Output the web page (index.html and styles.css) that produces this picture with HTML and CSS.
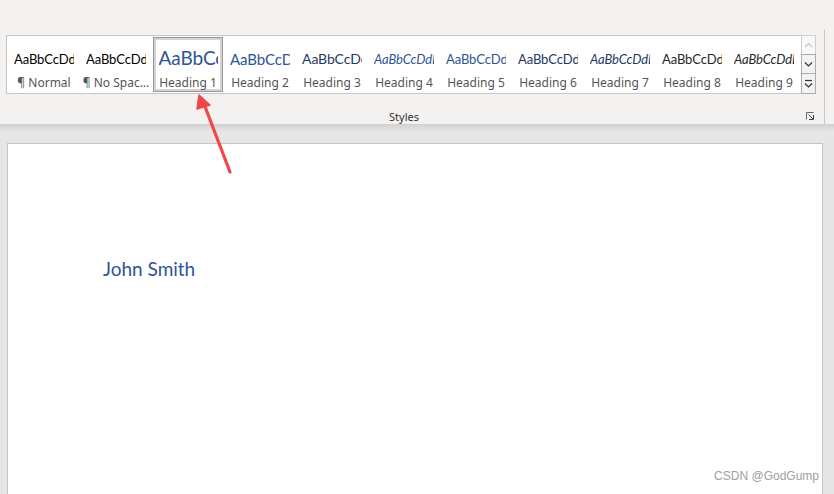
FILE: index.html
```html
<!DOCTYPE html>
<html>
<head>
<meta charset="utf-8">
<link rel="stylesheet" href="styles.css">
</head>
<body>
<div class="ribbon">
  <div class="group">
    <div class="gallery-row">
      <div class="gallery">
        <div class="item"><div class="pv pv-normal">AaBbCcDdEe</div><div class="lbl">¶ Normal</div></div>
        <div class="item"><div class="pv pv-normal">AaBbCcDdEe</div><div class="lbl">¶ No Spac...</div></div>
        <div class="item selected"><div class="pv pv-h1">AaBbCcDd</div><div class="lbl">Heading 1</div></div>
        <div class="item"><div class="pv pv-h2">AaBbCcDdE</div><div class="lbl">Heading 2</div></div>
        <div class="item"><div class="pv pv-h3">AaBbCcDdE</div><div class="lbl">Heading 3</div></div>
        <div class="item"><div class="pv pv-h4">AaBbCcDdEe</div><div class="lbl">Heading 4</div></div>
        <div class="item"><div class="pv pv-h5">AaBbCcDdEe</div><div class="lbl">Heading 5</div></div>
        <div class="item"><div class="pv pv-h6">AaBbCcDdEe</div><div class="lbl">Heading 6</div></div>
        <div class="item"><div class="pv pv-h7">AaBbCcDdEe</div><div class="lbl">Heading 7</div></div>
        <div class="item"><div class="pv pv-h8">AaBbCcDdEe</div><div class="lbl">Heading 8</div></div>
        <div class="item"><div class="pv pv-h9">AaBbCcDdEe</div><div class="lbl">Heading 9</div></div>
      </div>
      <div class="scroll">
        <div class="sbtn disabled"><svg width="9" height="6" viewBox="0 0 9 6"><path d="M1 5 L4.5 1.5 L8 5" fill="none" stroke="#c8c6c4" stroke-width="1.2"/></svg></div>
        <div class="sbtn"><svg width="9" height="6" viewBox="0 0 9 6"><path d="M1 1.5 L4.5 5 L8 1.5" fill="none" stroke="#333" stroke-width="1.2"/></svg></div>
        <div class="sbtn more"><svg width="9" height="9" viewBox="0 0 9 9"><path d="M1 1.5 H8" stroke="#333" stroke-width="1.2"/><path d="M1 4.5 L4.5 8 L8 4.5" fill="none" stroke="#333" stroke-width="1.2"/></svg></div>
      </div>
    </div>
    <div class="group-foot">
      <span class="group-label">Styles</span>
      <span class="launcher"><svg width="8" height="8" viewBox="0 0 8 8"><path d="M0.5 7.5 V0.5 H7.5" fill="none" stroke="#666" stroke-width="1"/><path d="M7.5 3 V7.5 H3" fill="none" stroke="#444" stroke-width="1"/><path d="M2.5 2.5 L7 7" stroke="#444" stroke-width="1"/></svg></span>
    </div>
  </div>
  <div class="sep"></div>
</div>
<div class="shadow"></div>
<div class="canvas">
  <div class="page">
    <div class="name">John Smith</div>
  </div>
</div>
<div class="watermark">CSDN @GodGump</div>
<svg class="arrow" width="60" height="100" viewBox="0 0 60 100">
  <path d="M45 78 L19 10" stroke="#ef4848" stroke-width="3.2" stroke-linecap="round"/>
  <path d="M14 1 L12 15 L25 11 Z" fill="#ef4848" stroke="#ef4848" stroke-width="1.5" stroke-linejoin="round"/>
</svg>
</body>
</html>
```
FILE: styles.css
```css
html, body {
  margin: 0;
  padding: 0;
  width: 834px;
  height: 494px;
  overflow: hidden;
  background: #e6e6e6;
  font-family: "Noto Sans", "Open Sans", sans-serif;
  position: relative;
}
.ribbon {
  height: 124px;
  background: #f3f2f1;
  display: flex;
  padding-left: 6px;
  box-sizing: border-box;
}
.group {
  display: flex;
  flex-direction: column;
  padding-top: 35px;
  width: 810px;
}
.gallery-row {
  display: flex;
}
.gallery {
  display: flex;
  width: 795px;
  height: 59px;
  box-sizing: border-box;
  border: 1px solid #c8c6c4;
  border-right: none;
  background: #fff;
  padding: 1px 0 0 1px;
}
.item {
  width: 70px;
  height: 55px;
  margin: 0 1px;
  box-sizing: border-box;
  border: 1px solid transparent;
  display: flex;
  flex-direction: column;
  align-items: center;
  overflow: hidden;
}
.item.selected {
  border-color: #9a9896;
  box-shadow: inset 0 0 0 2px #d4d3d2;
}
.pv {
  width: 60px;
  height: 30px;
  overflow: hidden;
  white-space: nowrap;
  font-family: "Lato", "Noto Sans", sans-serif;
  color: #000;
  font-size: 13px;
  line-height: 30px;
  padding-top: 6px;
  box-sizing: content-box;
  text-align: left;
  letter-spacing: -0.1px;
}
.pv-h1 { font-size: 19px; color: #2f5496; padding-top: 4px; line-height: 32px; height: 32px; width: 59px; }
.pv-h2 { font-size: 15px; color: #2f5496; }
.pv-h3 { font-size: 14px; color: #1f3763; }
.pv-h4 { color: #2f5496; font-style: italic; }
.pv-h5 { color: #2f5496; }
.pv-h6 { color: #1f3763; }
.pv-h7 { color: #1f3763; font-style: italic; }
.pv-h8 { color: #272727; }
.pv-h9 { color: #272727; font-style: italic; }
.lbl {
  font-size: 12px;
  color: #555;
  line-height: 14px;
  white-space: nowrap;
  margin-top: 2px;
}
.scroll {
  display: flex;
  flex-direction: column;
  width: 15px;
}
.sbtn {
  height: 20px;
  box-sizing: border-box;
  border: 1px solid #aeadac;
  margin-top: -1px;
  background: #f3f2f1;
  display: flex;
  align-items: center;
  justify-content: center;
}
.sbtn:first-child { margin-top: 0; }
.sbtn.disabled { border-color: #d2d0ce; background: #f8f8f8; }
.sbtn.more { height: 21px; }
.group-foot {
  position: relative;
  height: 30px;
  display: flex;
  align-items: center;
  justify-content: center;
  padding-right: 14px;
}
.group-label {
  font-size: 11px;
  color: #333;
  margin-top: 14px;
}
.launcher {
  position: absolute;
  right: 2px;
  top: 18px;
  width: 8px;
  height: 8px;
  display: flex;
}
.sep {
  width: 1px;
  background: #c8c6c4;
  margin: 30px 0 0 8px;
  height: 94px;
}
.shadow {
  height: 7px;
  background: linear-gradient(#d0d0d0, #e6e6e6);
}
.canvas {
  padding: 12px 11px 0 7px;
}
.page {
  background: #fff;
  border: 1px solid #c6c6c6;
  border-bottom: none;
  height: 351px;
  box-sizing: border-box;
  padding: 112px 0 0 95px;
}
.name {
  font-family: "Lato", "Noto Sans", sans-serif;
  font-size: 19px;
  color: #2f5496;
  line-height: 26px;
}
.watermark {
  position: absolute;
  right: 15px;
  top: 469px;
  font-family: "Liberation Sans", Arial, sans-serif;
  font-size: 12px;
  color: #a0a0a0;
}
.arrow {
  position: absolute;
  left: 185px;
  top: 94px;
}
```
